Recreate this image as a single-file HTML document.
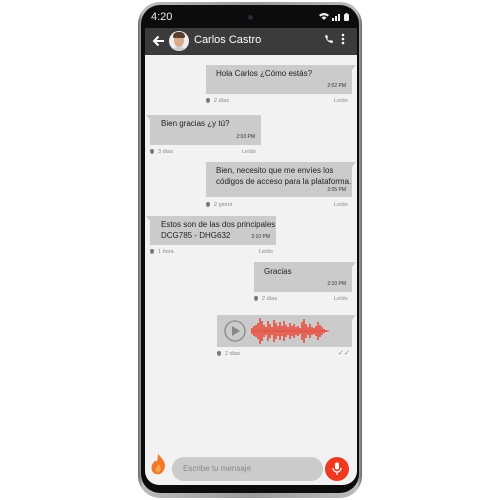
<!DOCTYPE html>
<html><head><meta charset="utf-8"><style>
*{margin:0;padding:0;box-sizing:border-box}
body{width:500px;height:500px;background:#fff;position:relative;overflow:hidden;font-family:"Liberation Sans","DejaVu Sans",sans-serif}
.frame{position:absolute;left:138px;top:2px;width:224px;height:496px;border-radius:22px;background:linear-gradient(90deg,#666,#bbb 2%,#999 50%,#bbb 98%,#666);}
.black{position:absolute;left:141px;top:5px;width:218px;height:488px;border-radius:19px;background:#0c0c0c}
.screen{position:absolute;left:145px;top:28px;width:212px;height:457px;background:#f2f2f2;border-radius:0 0 14px 14px;overflow:hidden}
.status{position:absolute;left:151px;top:11px;color:#eee;font-size:11px}
.hdr{position:absolute;left:0;top:0;width:212px;height:27px;background:#3b3b3b;color:#fff}
.b{position:absolute;background:#cbcbcb;font-size:8px;color:#222;line-height:12px}
.b .t{position:absolute;right:6px;bottom:2px;font-size:5px;color:#333}
.m{position:absolute;font-size:5.5px;color:#888}
.drop{display:inline-block;width:4px;height:5px;background:#777;border-radius:50% 50% 50% 50%/40% 40% 60% 60%;margin-right:4px;vertical-align:-1px}
.nr:after{content:"";position:absolute;right:-4px;top:0;border-top:5px solid #cbcbcb;border-right:4px solid transparent}
.nl:after{content:"";position:absolute;left:-4px;top:0;border-top:5px solid #cbcbcb;border-left:4px solid transparent}
</style></head><body>
<div class="frame"></div><div class="black"></div>
<div class="status">4:20</div>
<div style="position:absolute;left:248px;top:15px;width:5px;height:5px;border-radius:50%;background:#2a2a3a"></div>
<svg style="position:absolute;left:318px;top:12px" width="36" height="10" viewBox="0 0 36 10"><path d="M1 3 Q6 -1 11 3 L9.5 4.5 Q6 2 2.5 4.5Z M3.5 5.5 Q6 3.5 8.5 5.5 L6 8Z" fill="#eee"/><rect x="14" y="6" width="2" height="3" fill="#eee"/><rect x="17" y="4" width="2" height="5" fill="#eee"/><rect x="20" y="2" width="2" height="7" fill="#eee"/><rect x="26" y="2" width="5" height="7" rx="1" fill="#eee"/><rect x="27.5" y="1" width="2" height="1" fill="#eee"/></svg>
<div class="screen">
<div class="hdr">
<svg style="position:absolute;left:7px;top:7px" width="13" height="12" viewBox="0 0 13 12"><path d="M12 6H2M6.5 1.5L2 6l4.5 4.5" stroke="#fff" stroke-width="2" fill="none"/></svg>
<div style="position:absolute;left:24px;top:3px;width:20px;height:20px;border-radius:50%;background:#eee;overflow:hidden"><div style="position:absolute;left:5px;top:3px;width:10px;height:13px;border-radius:50%;background:#d9a98a"></div><div style="position:absolute;left:4px;top:1px;width:12px;height:6px;border-radius:6px 6px 2px 2px;background:#5a4030"></div><div style="position:absolute;left:2px;top:16px;width:16px;height:8px;border-radius:50%;background:#ccc"></div></div>
<div style="position:absolute;left:49px;top:6px;font-size:11px">Carlos Castro</div>
<svg style="position:absolute;left:179px;top:6px" width="10" height="10" viewBox="0 0 10 10"><path d="M1 1.5 L3 1 L4 3.5 L3 4.5 Q4.5 6.5 5.5 7 L6.5 6 L9 7 L8.5 9 Q3 9 1 1.5Z" fill="#fff"/></svg>
<svg style="position:absolute;left:196px;top:5px" width="4" height="12"><circle cx="2" cy="2" r="1.3" fill="#fff"/><circle cx="2" cy="6" r="1.3" fill="#fff"/><circle cx="2" cy="10" r="1.3" fill="#fff"/></svg>
</div>
<div class="b nr" style="left:61px;top:37px;width:146px;height:29px"><div style="position:absolute;left:10px;top:3px">Hola Carlos ¿Cómo estás?</div><div class="t">2:02 PM</div></div>
<div class="m" style="left:61px;top:70px"><span class="drop"></span>2 días</div><div class="m" style="left:189px;top:70px">Leído</div>
<div class="b nl" style="left:5px;top:87px;width:111px;height:30px"><div style="position:absolute;left:11px;top:3px">Bien gracias ¿y tú?</div><div class="t">2:03 PM</div></div>
<div class="m" style="left:5px;top:121px"><span class="drop"></span>3 días</div><div class="m" style="left:97px;top:121px">Leído</div>
<div class="b nr" style="left:61px;top:134px;width:146px;height:35px"><div style="position:absolute;left:10px;top:3px;line-height:11px">Bien, necesito que me envíes los<br>códigos de acceso para la plataforma.</div><div class="t" style="bottom:1px">2:05 PM</div></div>
<div class="m" style="left:61px;top:174px"><span class="drop"></span>2 giorni</div><div class="m" style="left:189px;top:174px">Leído</div>
<div class="b nl" style="left:5px;top:188px;width:126px;height:29px"><div style="position:absolute;left:11px;top:3px;line-height:11px">Estos son de las dos principales<br>DCG785 - DHG632</div><div class="t">2:10 PM</div></div>
<div class="m" style="left:5px;top:221px"><span class="drop"></span>1 hora</div><div class="m" style="left:114px;top:221px">Leído</div>
<div class="b nr" style="left:109px;top:234px;width:98px;height:30px"><div style="position:absolute;left:10px;top:4px">Gracias</div><div class="t">2:10 PM</div></div>
<div class="m" style="left:109px;top:268px"><span class="drop"></span>2 días</div><div class="m" style="left:189px;top:268px">Leído</div>
<div class="b nr" style="left:72px;top:287px;width:135px;height:32px">
<svg style="position:absolute;left:7px;top:5px" width="22" height="22"><circle cx="11" cy="11" r="10" fill="none" stroke="#888" stroke-width="1.3"/><path d="M8 6 L16 11 L8 16Z" fill="#888"/></svg>
<svg style="position:absolute;left:34px;top:2px" width="92" height="28" viewBox="0 0 92 28"><g stroke="#e94b3c" stroke-width="1.6"><path d="M1 11v6M3 9v10M5 8v12M7 6v16M9 1v26M11 4v20M13 8v12M15 10v8M17 4v20M19 7v14M21 10v8M23 3v22M25 6v16M27 9v10M29 5v18M31 9v10M33 4v20M35 8v12M37 10v8M39 6v16M41 9v10M43 7v14M45 10v8M47 9v10M49 11v6M51 5v18M53 2v24M55 7v14M57 10v8M59 7v14M61 10v8M63 11v6M65 9v10M67 5v18M69 8v12M71 10v8M73 12v4M75 13v2"/></g><path d="M0 14H78" stroke="#e94b3c" stroke-width="1"/></svg>
</div>
<div class="m" style="left:72px;top:323px"><span class="drop"></span>2 días</div><div class="m" style="left:193px;top:321px;font-size:7px">✓✓</div>
<svg style="position:absolute;left:6px;top:425px" width="15" height="22" viewBox="0 0 13 18"><path d="M6 0 C9 4 13 7 12 12 C11 16 8 18 6 18 C2 18 0 15 0.5 11 C1 8 3 8 3 6 C5 8 6 6 6 0Z" fill="#f07a2a"/><path d="M6.5 9 C8 11 9 13 8 15 C7 17 4 17 4 14 C4 12 6 12 6.5 9Z" fill="#f8a24a"/></svg>
<div style="position:absolute;left:27px;top:429px;width:151px;height:24px;border-radius:12px;background:#cbcbcb;font-size:8px;color:#888;padding:7px 0 0 11px">Escribe tu mensaje</div>
<div style="position:absolute;left:180px;top:429px;width:24px;height:24px;border-radius:50%;background:#ef3a1f"></div>
<svg style="position:absolute;left:186px;top:434px" width="12" height="14" viewBox="0 0 12 14"><rect x="4" y="0.5" width="4" height="7" rx="2" fill="#fff"/><path d="M2 6a4 4 0 0 0 8 0M6 10v3" stroke="#fff" stroke-width="1.2" fill="none"/></svg>
</div>
</body></html>
